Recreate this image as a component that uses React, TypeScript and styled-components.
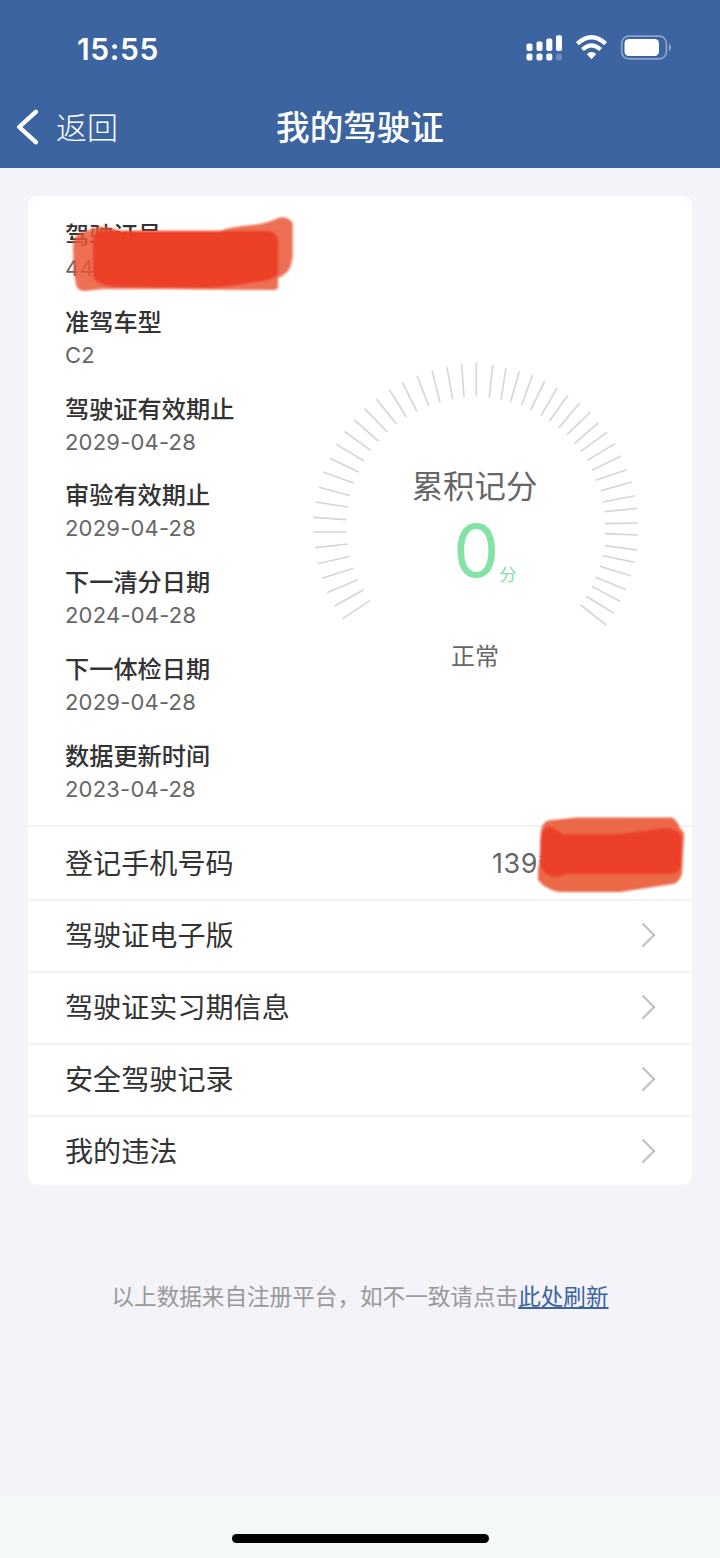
import React from "react";
import styled, { createGlobalStyle } from "styled-components";

const Global = createGlobalStyle`
  * { box-sizing: border-box; }
  body {
    margin: 0;
    background: #f4f3f9;
    font-family: Inter, "Noto Sans CJK SC", sans-serif;
    color: #333;
  }
`;

const Screen = styled.div`
  width: 720px;
  height: 1558px;
  display: flex;
  flex-direction: column;
  overflow: hidden;
`;

const Header = styled.header`
  height: 168px;
  flex: none;
  background: #3c64a1;
  color: #fff;
  display: flex;
  flex-direction: column;
`;

const StatusBar = styled.div`
  height: 87px;
  padding: 10px 49px 0 77px;
  display: flex;
  align-items: center;
  justify-content: space-between;
`;

const Clock = styled.span`
  font-size: 30px;
  line-height: 40px;
  font-weight: 600;
  letter-spacing: 0.6px;
`;

const StatusIcons = styled.svg`
  display: block;
  width: 146px;
  height: 30px;
`;

const NavBar = styled.nav`
  flex: 1;
  display: grid;
  grid-template-columns: 1fr auto 1fr;
  align-items: center;
`;

const Back = styled.div`
  display: flex;
  align-items: center;
  gap: 17px;
  padding-left: 16px;
  font-size: 31px;
  line-height: 40px;
  font-weight: 300;

  svg {
    margin-bottom: 2px;
  }
`;

const Title = styled.h1`
  margin: 0;
  font-size: 33.6px;
  line-height: 44px;
  font-weight: 500;
`;

const Card = styled.main`
  width: 664px;
  height: 989px;
  margin: 28px auto 0;
  flex: none;
  background: #fff;
  border-radius: 9px;
`;

const Summary = styled.section`
  height: 629px;
  padding: 22px 0 0 37px;
  display: flex;
`;

const Details = styled.dl`
  margin: 0;
  width: 235px;
  flex: none;
`;

const Detail = styled.div`
  position: relative;
  height: 86.8px;
  padding-top: 1px;
`;

const Label = styled.dt`
  font-size: 24.2px;
  line-height: 34px;
  font-weight: 500;
  white-space: nowrap;
`;

const Value = styled.dd`
  margin: 0;
  font-size: 22px;
  line-height: 30px;
  letter-spacing: 0.2px;
  color: #666;
  white-space: nowrap;
`;

const Gauge = styled.div`
  position: relative;
  width: 352px;
  height: 330px;
  margin-top: 132px;
  padding-top: 112px;
  display: flex;
  flex-direction: column;
  align-items: center;
  color: #666;
`;

const Ticks = styled.svg`
  position: absolute;
  left: 0;
  top: 0;
`;

const GaugeTitle = styled.div`
  margin-right: 3px;
  font-size: 31.4px;
  line-height: 50px;
`;

const Score = styled.div`
  display: flex;
  align-items: baseline;
  margin-left: 18px;
  line-height: 78px;
  color: #83e3a4;
`;

const Points = styled.span`
  font-size: 73px;
`;

const Unit = styled.span`
  position: relative;
  top: 4px;
  font-size: 17.5px;
`;

const Status = styled.div`
  margin-top: 29px;
  margin-right: 2px;
  font-size: 24px;
  line-height: 36px;
`;

const Row = styled.div<{ $tall?: boolean }>`
  position: relative;
  height: ${(p) => (p.$tall ? 74 : 72)}px;
  border-top: 2px solid #f2f2f4;
  padding: ${(p) => (p.$tall ? 2 : 0)}px 36px 0 37px;
  display: flex;
  align-items: center;
  justify-content: space-between;
  font-size: 28.1px;
  line-height: 40px;
`;

const Phone = styled.span`
  width: 164px;
  font-size: 27px;
  letter-spacing: 0.5px;
  color: #666;
`;

const Scribble = styled.svg<{ $x: number; $y: number }>`
  position: absolute;
  left: ${(p) => p.$x}px;
  top: ${(p) => p.$y}px;
`;

const ChevronIcon = styled.svg`
  width: 15px;
  height: 26px;
  margin-bottom: 2px;
`;

const Note = styled.p`
  margin: 92px 0 0;
  text-align: center;
  font-size: 22.6px;
  line-height: 40px;
  color: #999;
`;

const Refresh = styled.a`
  color: #3c64a1;
  text-decoration: underline;
  text-decoration-thickness: 2px;
  text-underline-offset: 2px;
`;

const HomeArea = styled.footer`
  margin-top: auto;
  height: 62px;
  background: #f3f8f9;
  display: flex;
  align-items: flex-end;
  justify-content: center;
  padding-bottom: 15px;
`;

const HomeIndicator = styled.div`
  width: 257px;
  height: 9px;
  border-radius: 5px;
  background: #000;
`;

const details = [
  ["驾驶证号", "44"],
  ["准驾车型", "C2"],
  ["驾驶证有效期止", "2029-04-28"],
  ["审验有效期止", "2029-04-28"],
  ["下一清分日期", "2024-04-28"],
  ["下一体检日期", "2029-04-28"],
  ["数据更新时间", "2023-04-28"],
];

const links = ["驾驶证电子版", "驾驶证实习期信息", "安全驾驶记录", "我的违法"];

const leftTicks =
  "M46 456L144 471M57 412L151 437M69 366L161 399M90 325L177 367M109 283L192 333M133 244L212 301M162 209L236 274M194 176L262 246M229 147L289 222M268 119L319 201M307 97L351 185M351 77L386 167M396 62L420 157M441 52L458 148M485 43L492 141M529 39V137";
const lowerLeftTicks =
  "M40 52L139 59M40 96H139M46 143L144 132M54 191L150 169M66 235L160 205M81 278L173 239M104 318L190 270M128 356L210 302";
const rightTicks =
  "M68 45L58 143M108 54L93 150M148 64L121 157M188 74L155 165M224 94L181 181M262 113L213 197M294 135L238 214M329 159L266 234M361 186L291 254M386 218L313 281M411 247L332 304M435 281L352 331M453 318L366 361M470 359L377 391M486 396L392 422M495 437L399 456";
const lowerRightTicks =
  "M501 25L403 35M504 69L405 71M504 105L405 101M501 150L404 137M494 187L398 167M483 228L390 199M469 269L377 232M452 305L366 259M432 340L348 288M410 376L332 315";

const DeviceStatus = () => (
  <StatusIcons viewBox="0 0 146 30" fill="#fff">
    <rect x="1.5" y="9.5" width="6" height="7.5" rx="1.8" />
    <rect x="11.5" y="7.5" width="6" height="9.5" rx="1.8" />
    <rect x="21.3" y="4.5" width="6" height="12.5" rx="1.8" />
    <rect x="31" y="1.3" width="6" height="15.7" rx="1.8" />
    <rect x="1.5" y="19.5" width="6" height="7" rx="2" />
    <rect x="11.5" y="19.5" width="6" height="7" rx="2" />
    <rect x="21.3" y="19.5" width="6" height="7" rx="2" />
    <rect x="31" y="19.5" width="6" height="7" rx="2" opacity="0.25" />
    <path d="M52.4 9.6Q66.5-3.2 80.6 9.6" fill="none" stroke="#fff" strokeWidth="4.3" />
    <path d="M57.4 15.5Q66.5 7.2 75.6 15.5" fill="none" stroke="#fff" strokeWidth="4.1" />
    <path d="M61.7 20Q66.5 15.8 71.3 20L66.5 25.2Z" />
    <rect x="96.7" y="2.2" width="44.7" height="22.6" rx="7" fill="none" stroke="#fff" strokeWidth="1.7" opacity="0.42" />
    <rect x="99.5" y="5" width="34.5" height="17" rx="4.4" />
    <path d="M144 9.5Q148 13.5 144 17.5Z" opacity="0.45" />
  </StatusIcons>
);

const IdScribble = () => (
  <Scribble $x={0} $y={-10} width="240" height="96" viewBox="0 0 240 96">
    <defs>
      <filter id="soft"><feGaussianBlur stdDeviation="0.9" /></filter>
    </defs>
    <g filter="url(#soft)">
      <path d="M8 37Q9 27 16 25L32 19Q42 18 55 22.7H155Q170 18 188 17Q204 15 213 10Q222 7 227.7 15V49Q226 60 222 64Q218 68 213 70V79Q213 82 208 82L90 81H38L20 83Q13 83 11 77Q8 60 8 37Z" fill="#eb5431" opacity="0.84" />
      <path d="M28 32Q29 23 38 23H204Q213 24 213 34V66Q209 72 190 74Q155 80 140 80L55 79Q29 78 28 67Z" fill="#ed4029" opacity="0.96" />
    </g>
  </Scribble>
);

const PhoneScribble = () => (
  <Scribble $x={508} $y={-11} width="152" height="80" viewBox="0 0 152 80">
    <g filter="url(#soft)">
      <path d="M5 14Q7 6 12 4.5L41 1.5H135Q140 2 144 12L148 17L146 58Q143 67 137 68L84 76H24Q10 74 2 64V54Q5 40 4 27Z" fill="#eb5d39" opacity="0.93" />
      <path d="M5 19Q10 7 19 13Q25 18 30 18.5H77Q100 16 127 12Q143 11 146 22L145 50Q144 58 133 58H30Q17 64 9 57L4 51Z" fill="#ed4029" opacity="0.96" />
    </g>
  </Scribble>
);

const Chevron = () => (
  <ChevronIcon viewBox="0 0 15 26" fill="none" stroke="#c3c3c6" strokeWidth="2.4" strokeLinecap="round">
    <path d="M2 2L13 13L2 24" />
  </ChevronIcon>
);

export default function App() {
  return (
    <Screen lang="zh-CN">
      <Global />
      <Header>
        <StatusBar>
          <Clock>15:55</Clock>
          <DeviceStatus />
        </StatusBar>
        <NavBar>
          <Back>
            <svg width="23" height="36" viewBox="0 0 23 36" fill="none" stroke="#fff" strokeWidth="4.4" strokeLinecap="round" strokeLinejoin="round">
              <path d="M19.8 2.8L3.2 18L19.8 33.2" />
            </svg>
            返回
          </Back>
          <Title>我的驾驶证</Title>
        </NavBar>
      </Header>
      <Card>
        <Summary>
          <Details>
            {details.map(([label, value], i) => (
              <Detail key={label}>
                <Label>{label}</Label>
                <Value>{value}</Value>
                {i === 0 && <IdScribble />}
              </Detail>
            ))}
          </Details>
          <Gauge>
            <Ticks width="352" height="330" viewBox="0 0 1056 990" fill="none" stroke="#d5d5d5" strokeWidth="4.8">
              <path d={leftTicks} />
              <path d={lowerLeftTicks} transform="translate(0 450)" />
              <path d={rightTicks} transform="translate(510 0)" />
              <path d={lowerRightTicks} transform="translate(510 450)" />
            </Ticks>
            <GaugeTitle>累积记分</GaugeTitle>
            <Score>
              <Points>0</Points>
              <Unit>分</Unit>
            </Score>
            <Status>正常</Status>
          </Gauge>
        </Summary>
        <Row $tall>
          登记手机号码
          <Phone>139*</Phone>
          <PhoneScribble />
        </Row>
        {links.map((text) => (
          <Row key={text}>
            {text}
            <Chevron />
          </Row>
        ))}
      </Card>
      <Note>
        以上数据来自注册平台，如不一致请点击<Refresh>此处刷新</Refresh>
      </Note>
      <HomeArea>
        <HomeIndicator />
      </HomeArea>
    </Screen>
  );
}
